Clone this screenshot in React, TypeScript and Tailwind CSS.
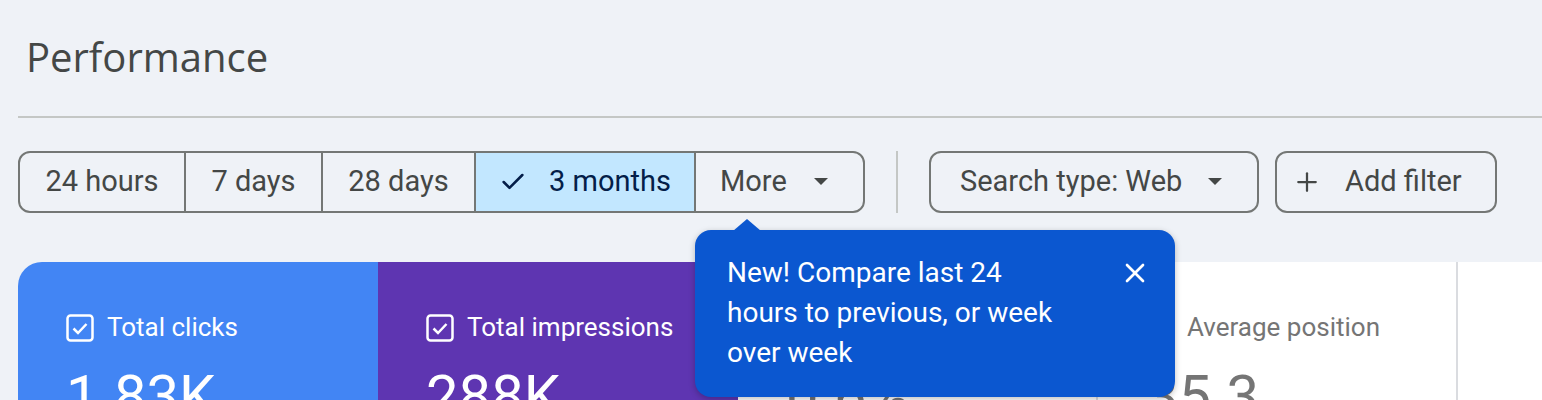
import { Check, X, Plus } from "lucide-react";

const ranges = [
  { label: "24 hours", w: "w-[166px]" },
  { label: "7 days", w: "w-[137px]" },
  { label: "28 days", w: "w-[153px]" },
];

function Caret() {
  return (
    <svg width="14" height="8" viewBox="0 0 14 8" className="fill-[#444746]">
      <path d="M0 0h14L7 7z" />
    </svg>
  );
}

function Box() {
  return (
    <svg width="28" height="28" viewBox="0 0 28 28" fill="none" stroke="white">
      <rect x="1.5" y="1.5" width="25" height="25" rx="3" strokeWidth="2.5" />
      <path d="M7.5 14.5l4.5 4.5 8.5-9" strokeWidth="2.5" />
    </svg>
  );
}

export default function App() {
  return (
    <div className="relative h-[400px] overflow-hidden bg-[#eff2f7] font-['Roboto',sans-serif]">
      <div className="pl-[18px]">
        <h1 className="flex h-[116px] items-center pl-[8px] pb-[2px] font-['Open_Sans',sans-serif] text-[40px] text-[#444746]">
          Performance
        </h1>
        <div className="h-[2px] bg-[#c4c7c5]" />

        <div className="mt-[33px] flex h-[62px] items-stretch text-[29px] text-[#444746]">
          <div className="flex overflow-hidden rounded-[12px] border-2 border-[#747775]">
            {ranges.map((r) => (
              <div key={r.label} className={`${r.w} flex items-center justify-center border-r-2 border-[#747775]`}>
                {r.label}
              </div>
            ))}
            <div className="flex w-[220px] items-center justify-center gap-[22px] border-r-2 border-[#747775] bg-[#c2e7ff] text-[#041e49]">
              <Check size={28} strokeWidth={2.2} />
              3 months
            </div>
            <div className="flex w-[167px] items-center gap-[27px] pl-[24px]">
              More
              <Caret />
            </div>
          </div>
          <div className="mx-[31px] w-[2px] bg-[#c4c7c5]" />
          <div className="flex w-[330px] items-center gap-[26px] rounded-[12px] border-2 border-[#747775] pl-[29px]">
            Search type: Web
            <Caret />
          </div>
          <div className="ml-[16px] flex w-[222px] items-center gap-[23px] rounded-[12px] border-2 border-[#747775] pl-[15px]">
            <Plus size={30} strokeWidth={1.8} />
            Add filter
          </div>
        </div>

        <div className="mt-[49px] flex h-[200px]">
          <div className="w-[360px] rounded-tl-[24px] bg-[#4285f4] pl-[48px] pt-[46px] text-white">
            <div className="flex items-center gap-[13px] text-[26px]">
              <Box />
              Total clicks
            </div>
            <div className="mt-[20px] text-[58px] leading-none">1.83K</div>
          </div>
          <div className="w-[360px] bg-[#5e35b1] pl-[48px] pt-[46px] text-white">
            <div className="flex items-center gap-[13px] text-[26px]">
              <Box />
              Total impressions
            </div>
            <div className="mt-[20px] text-[58px] leading-none">288K</div>
          </div>
          <div className="w-[360px] border-r-2 border-[#dadce0] bg-white pl-[48px] pt-[46px] text-[#757575]">
            <div className="flex items-center gap-[13px] text-[26px]">
              <div className="h-[28px] w-[28px]" />
              Average CTR
            </div>
            <div className="mt-[20px] text-[58px] leading-none">0.6%</div>
          </div>
          <div className="w-[360px] border-r-2 border-[#dadce0] bg-white pl-[48px] pt-[46px] text-[#757575]">
            <div className="flex items-center gap-[13px] text-[26px]">
              <div className="h-[28px] w-[28px]" />
              Average position
            </div>
            <div className="mt-[20px] text-[58px] leading-none">35.3</div>
          </div>
          <div className="flex-1 bg-white" />
        </div>
      </div>

      <div className="absolute left-[695px] top-[230px] h-[167px] w-[480px] rounded-[16px] bg-[#0b57d0] pl-[32px] pr-[24px] pt-[23px] text-[28px] leading-[40px] text-white shadow-[0_2px_6px_rgba(0,0,0,0.25)]">
        <div className="absolute -top-[11px] left-[38px] h-0 w-0 border-x-[14px] border-b-[12px] border-x-transparent border-b-[#0b57d0]" />
        <div className="flex justify-between">
          <p>
            New! Compare last 24
            <br />
            hours to previous, or week
            <br />
            over week
          </p>
          <X size={32} strokeWidth={2} className="mt-[4px]" />
        </div>
      </div>
    </div>
  );
}
